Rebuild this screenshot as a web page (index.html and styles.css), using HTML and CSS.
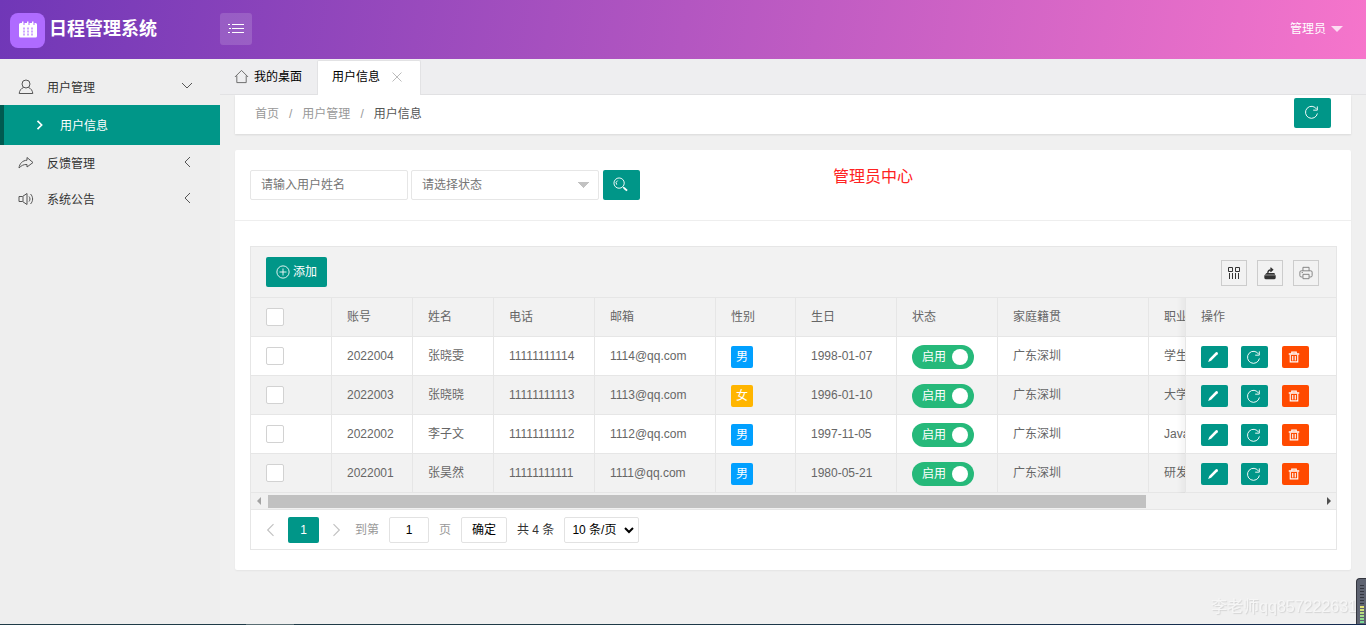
FILE: index.html
```html
<!DOCTYPE html>
<html lang="zh-CN">
<head>
<meta charset="utf-8">
<title>日程管理系统</title>
<link rel="stylesheet" href="styles.css">
</head>
<body>
<svg class="sprite" aria-hidden="true">
  <symbol id="i-chev" viewBox="0 0 12 12"><path d="M3 1l5 5-5 5"/></symbol>
  <symbol id="i-refresh" viewBox="0 0 16 16"><path d="M13.500 4.500A6.400 6.400 0 1 0 14.300 9M14.200 1.500V5.500H9.800"/></symbol>
  <symbol id="i-edit" viewBox="0 0 16 16"><path class="solid" d="M1.500 14.500l1.500-4L11.800 1.800a1.700 1.700 0 0 1 2.400 2.400L5.500 13z"/></symbol>
  <symbol id="i-trash" viewBox="0 0 16 16"><path class="thick" d="M1 4h14"/><path d="M5 3.500V1.500h6v2M3 5v9.500h10V5M6.300 6.500v6M9.700 6.500v6" stroke-width="1.500"/></symbol>
</svg>
<div class="app">
  <header class="header">
    <div class="brand">
      <span class="logo"><svg viewBox="0 0 20 20"><path class="solid" d="M1 4.500a1.500 1.500 0 0 1 1.500-1.500H4V1.500h1.500V5h1V3H9V1.500h1.500V5h1V3H14V1.500h1.500V5h1V3h1A1.500 1.500 0 0 1 19 4.500V16a1.500 1.500 0 0 1-1.500 1.500h-15A1.500 1.500 0 0 1 1 16z"/><path class="dots" d="M5 8.500h11M5 11.500h11M5 14.500h11"/></svg></span>
      <h1>日程管理系统</h1>
    </div>
    <button class="toggle" aria-label="折叠菜单"><svg viewBox="0 0 16 16"><path d="M4 3.500h12M4 7.500h12M4 11.500h12M0 3.500h2M1 7.500h2M0 11.500h2"/></svg></button>
    <a class="account" href="#">管理员<span class="caret"></span></a>
  </header>

  <nav class="side">
    <a class="item" href="#"><svg class="ico" viewBox="0 0 16 16"><circle cx="8" cy="5" r="4"/><path d="M5.500 8.500C3 9.500 1.500 11.500 1.200 14.500h13.600c-.3-3-1.800-5-4.300-6"/></svg><span>用户管理</span><svg class="arrow down"><use href="#i-chev"/></svg></a>
    <a class="sub" href="#"><svg class="arrow"><use href="#i-chev"/></svg><span>用户信息</span></a>
    <a class="item" href="#"><svg class="ico" viewBox="0 0 16 16"><path d="M9 2.500l6 5-6 4.500V9.500C5.500 9.300 3.500 10.500 1 13c.5-4.500 3.500-7.500 8-7.800z"/></svg><span>反馈管理</span><svg class="arrow left"><use href="#i-chev"/></svg></a>
    <a class="item" href="#"><svg class="ico" viewBox="0 0 16 16"><path d="M1 5.500h3.500L9 2.500v11l-4.500-3H1zM5 5.500v5M11 5.500c1.300 1.500 1.300 3.500 0 5M12.500 3c2.800 2.800 2.800 7.200 0 10"/></svg><span>系统公告</span><svg class="arrow left"><use href="#i-chev"/></svg></a>
  </nav>

  <main class="main">
    <div class="tabs">
      <a class="tab" href="#"><svg class="home" viewBox="0 0 16 16"><path d="M1 8.500l7-7 7 7M3 7v7.500h10V7"/></svg>我的桌面</a>
      <a class="tab on" href="#">用户信息<svg class="close" viewBox="0 0 12 12"><path d="M1.500 1.500l9 9M10.500 1.500l-9 9"/></svg></a>
    </div>
    <div class="crumbs">
      <a href="#">首页</a><i>/</i><a href="#">用户管理</a><i>/</i><b>用户信息</b>
      <button class="btn icon" aria-label="刷新"><svg><use href="#i-refresh"/></svg></button>
    </div>

    <section class="card">
      <form class="query">
        <input class="field name" type="text" placeholder="请输入用户姓名" aria-label="用户姓名">
        <select class="field state" aria-label="状态"><option>请选择状态</option></select>
        <button class="btn icon" type="button" aria-label="搜索"><svg viewBox="0 0 16 16"><circle cx="6.500" cy="6.500" r="5.500"/><path d="M5 3.800a3 3 0 0 0-1 4.400M10.500 10.500l2 2"/><path class="thick" d="M11.500 11.500l3.500 3"/></svg></button>
        <p class="note">管理员中心</p>
      </form>

      <div class="grid">
        <div class="tools">
          <button class="btn add"><svg viewBox="0 0 16 16"><circle cx="8" cy="8" r="7"/><path d="M8 4v8M4 8h8"/></svg>添加</button>
          <button class="tool" aria-label="筛选列"><svg viewBox="0 0 14 14"><path d="M1.500 1.500h4v4h-4zM8.500 1.500h4v4h-4zM2.500 7v6M5.500 7v6M8.500 7v6M11.500 7v6"/></svg></button>
          <button class="tool" aria-label="导出"><svg viewBox="0 0 16 16"><path class="solid" d="M1.500 10.500h13v3a1.500 1.500 0 0 1-1.500 1.500H3A1.500 1.500 0 0 1 1.500 13.500zM4 8h9l1 2H2z"/><path d="M5.500 8C5.500 5.500 7 4.300 10 4.300M8.500 2L11 4.300 8.500 6.500" stroke-width="1.500"/></svg></button>
          <button class="tool" aria-label="打印"><svg class="light" viewBox="0 0 16 16"><path d="M4.500 5.500v-4h7v4M4 12.500H2.500a1.500 1.500 0 0 1-1.500-1.500V7a1.500 1.500 0 0 1 1.500-1.500h11A1.500 1.500 0 0 1 15 7v4a1.500 1.500 0 0 1-1.500 1.500H12M4.500 9.500h7v5h-7zM3 7.500h1.500"/></svg></button>
        </div>
        <div class="scroll">
          <table>
            <colgroup><col class="c81"><col class="c81"><col class="c81"><col class="c101"><col class="c121"><col class="c80"><col class="c101"><col class="c101"><col class="c151"><col class="rest"><col class="ops"></colgroup>
            <thead>
              <tr><th><input type="checkbox" aria-label="全选"></th><th>账号</th><th>姓名</th><th>电话</th><th>邮箱</th><th>性别</th><th>生日</th><th>状态</th><th>家庭籍贯</th><th>职业</th><th class="fix">操作</th></tr>
            </thead>
            <tbody>
              <tr><td><input type="checkbox" aria-label="选择 2022004"></td><td>2022004</td><td>张晓雯</td><td>11111111114</td><td>1114@qq.com</td><td><span class="tag">男</span></td><td>1998-01-07</td><td><label class="switch"><input type="checkbox" checked>启用<span></span></label></td><td>广东深圳</td><td>学生</td><td class="fix"><div class="acts"><button class="btn" aria-label="编辑"><svg><use href="#i-edit"/></svg></button><button class="btn" aria-label="重置"><svg class="big"><use href="#i-refresh"/></svg></button><button class="btn red" aria-label="删除"><svg><use href="#i-trash"/></svg></button></div></td></tr>
              <tr><td><input type="checkbox" aria-label="选择 2022003"></td><td>2022003</td><td>张晓晓</td><td>11111111113</td><td>1113@qq.com</td><td><span class="tag f">女</span></td><td>1996-01-10</td><td><label class="switch"><input type="checkbox" checked>启用<span></span></label></td><td>广东深圳</td><td>大学</td><td class="fix"><div class="acts"><button class="btn" aria-label="编辑"><svg><use href="#i-edit"/></svg></button><button class="btn" aria-label="重置"><svg class="big"><use href="#i-refresh"/></svg></button><button class="btn red" aria-label="删除"><svg><use href="#i-trash"/></svg></button></div></td></tr>
              <tr><td><input type="checkbox" aria-label="选择 2022002"></td><td>2022002</td><td>李子文</td><td>11111111112</td><td>1112@qq.com</td><td><span class="tag">男</span></td><td>1997-11-05</td><td><label class="switch"><input type="checkbox" checked>启用<span></span></label></td><td>广东深圳</td><td>Java</td><td class="fix"><div class="acts"><button class="btn" aria-label="编辑"><svg><use href="#i-edit"/></svg></button><button class="btn" aria-label="重置"><svg class="big"><use href="#i-refresh"/></svg></button><button class="btn red" aria-label="删除"><svg><use href="#i-trash"/></svg></button></div></td></tr>
              <tr><td><input type="checkbox" aria-label="选择 2022001"></td><td>2022001</td><td>张昊然</td><td>11111111111</td><td>1111@qq.com</td><td><span class="tag">男</span></td><td>1980-05-21</td><td><label class="switch"><input type="checkbox" checked>启用<span></span></label></td><td>广东深圳</td><td>研发</td><td class="fix"><div class="acts"><button class="btn" aria-label="编辑"><svg><use href="#i-edit"/></svg></button><button class="btn" aria-label="重置"><svg class="big"><use href="#i-refresh"/></svg></button><button class="btn red" aria-label="删除"><svg><use href="#i-trash"/></svg></button></div></td></tr>
            </tbody>
          </table>
        </div>
        <div class="bar"><span class="tri l"></span><div class="track"><div class="thumb"></div></div><span class="tri r"></span></div>
        <div class="pager">
          <button class="nav" aria-label="上一页"><svg class="left"><use href="#i-chev"/></svg></button>
          <button class="page">1</button>
          <button class="nav" aria-label="下一页"><svg><use href="#i-chev"/></svg></button>
          <label class="jump">到第<input type="text" value="1">页</label>
          <button class="ok">确定</button>
          <span class="total">共 4 条</span>
          <span class="sizes"><select aria-label="每页条数"><option>10 条/页</option></select><svg viewBox="0 0 12 12"><path d="M2 4l4 4 4-4"/></svg></span>
        </div>
      </div>
    </section>
  </main>
</div>
<div class="mark">李老师qq857222631</div>
<div class="meter"><span class="dim"></span><span class="lit"></span></div>
<div class="edge"></div>
</body>
</html>
```
FILE: styles.css
```css
* { box-sizing: border-box; }
html, body { height: 100%; }
body {
  margin: 0;
  overflow: hidden;
  background: #f0f0f0;
  color: #666;
  font: 12px/20px "Liberation Sans", "Noto Sans CJK SC", sans-serif;
}
a { color: inherit; text-decoration: none; }
button, input, select { font: inherit; color: inherit; margin: 0; }
button { padding: 0; border: 0; background: none; }
svg { fill: none; stroke: currentColor; display: block; flex: none; }
.solid { fill: currentColor; stroke: none; }
.thick { stroke-width: 2; }
.sprite { display: none; }

.app {
  display: grid;
  grid-template: 59px 1fr / 220px minmax(0, 1fr);
  height: 100%;
}

.header {
  grid-column: 1 / 3;
  display: grid;
  grid-template-columns: 220px 1fr auto;
  align-items: center;
  padding-bottom: 1px;
  background: linear-gradient(100deg, #7037b7, #f675cb);
  color: #fff;
}
.brand { display: flex; align-items: center; gap: 4px; padding: 2px 0 0 10px; }
.logo {
  display: grid;
  place-items: center;
  width: 35px;
  height: 35px;
  border-radius: 8px;
  background: #af6bff;
}
.logo svg { width: 20px; height: 20px; }
.dots { stroke: #af6bff; stroke-width: 2; stroke-dasharray: 2 2; opacity: .6; }
.brand h1 { margin: 0; font-size: 18px; line-height: 26px; padding-bottom: 2px; }
.toggle {
  display: grid;
  place-items: center;
  width: 32px;
  height: 32px;
  border-radius: 3px;
  background: rgba(255, 255, 255, .15);
}
.toggle svg { width: 16px; height: 16px; }
.account { display: flex; align-items: center; gap: 5px; padding-right: 23px; }
.caret { border: 6px solid transparent; border-top-color: rgba(255, 255, 255, .75); border-bottom: 0; }

.side { padding-top: 10px; background: #eee; color: #333; }
.item { display: flex; align-items: center; height: 36px; padding: 0 27px 0 18px; }
.item span { margin-left: 13px; padding-top: 2px; flex: 1; }
.ico { width: 16px; height: 16px; color: #555; }
.arrow { width: 12px; height: 12px; color: #555; }
.item .arrow { margin-bottom: 2px; }
.down { transform: rotate(90deg); }
.left { transform: rotate(180deg); }
.sub {
  display: flex;
  align-items: center;
  gap: 14px;
  height: 40px;
  padding-left: 30px;
  border-left: 4px solid #005a50;
  background: #009688;
  color: #fff;
}
.sub span { padding-top: 2px; }
.sub .arrow { color: #fff; stroke-width: 2; height: 10px; }

.tabs {
  display: flex;
  height: 36px;
  padding-top: 1px;
  background: #eeeef0;
  border-bottom: 1px solid #e2e2e4;
  color: #000;
}
.tab { display: flex; align-items: center; gap: 5px; height: 33px; padding: 0 15px 0 14px; }
.tab.on {
  height: 35px;
  padding: 0 17px 3px 14px;
  gap: 11px;
  border: 1px solid #e2e2e4;
  border-bottom: 0;
  border-radius: 2px 2px 0 0;
  background: #fff;
  box-shadow: 0 1px #fff;
}
.home { width: 15px; height: 15px; color: #666; }
.close { width: 12px; height: 12px; color: #bbb; }

.crumbs {
  display: flex;
  align-items: center;
  height: 39px;
  margin: 0 15px;
  padding: 0 20px 3px;
  background: #fff;
  box-shadow: 0 1px 2px rgba(0, 0, 0, .1);
  color: #999;
}
.crumbs a, .crumbs i, .crumbs b { padding-top: 2px; }
.crumbs i { margin: 0 10px; font-style: normal; }
.crumbs b { flex: 1; font-weight: normal; color: #555; }

.btn {
  display: flex;
  align-items: center;
  justify-content: center;
  height: 30px;
  border-radius: 2px;
  background: #009688;
  color: #fff;
}
.icon { width: 37px; }
.icon svg { width: 15px; height: 15px; margin: 0 3px 1px 0; }

.card {
  margin: 16px 15px 0;
  padding-bottom: 20px;
  border-radius: 2px;
  background: #fff;
  box-shadow: 0 1px 2px rgba(0, 0, 0, .05);
}
.query {
  display: flex;
  align-items: center;
  padding: 20px 15px;
  border-bottom: 1px solid #eee;
}
.field { height: 30px; border: 1px solid #e6e6e6; border-radius: 2px; background: #fff; color: #757575; }
.name { width: 158px; margin-right: 3px; padding: 0 10px; }
.name::placeholder { color: #757575; }
.state {
  appearance: none;
  width: 188px;
  margin-right: 4px;
  padding: 0 10px;
  background-image: conic-gradient(from -45deg at 50% 100%, #c2c2c2 90deg, transparent 0);
  background-repeat: no-repeat;
  background-position: right 9px center;
  background-size: 12px 6px;
}
.note { align-self: flex-start; margin: 0 0 0 193px; font-size: 16px; line-height: 14px; color: #f22; }

.grid { margin: 25px 14px 0 15px; border: 1px solid #e6e6e6; }
.tools {
  display: flex;
  align-items: center;
  gap: 10px;
  height: 50px;
  padding: 0 17px 0 15px;
  background: #f2f2f2;
}
.add { width: 61px; gap: 3px; margin-right: auto; }
.add svg { width: 14px; height: 14px; }
.tool { display: grid; place-items: center; width: 26px; height: 26px; margin-top: 2px; border: 1px solid #ccc; color: #333; }
.tool svg { width: 14px; height: 14px; }
.tool .light { color: #777; }

.scroll { overflow: hidden; border-top: 1px solid #e6e6e6; }
table { width: 1299px; table-layout: fixed; border-collapse: separate; border-spacing: 0; }
.c80 { width: 80px; }
.c81 { width: 81px; }
.c101 { width: 101px; }
.c121 { width: 121px; }
.c151 { width: 151px; }
.ops { width: 151px; }
th, td {
  height: 39px;
  padding: 0 0 0 15px;
  border: solid #e6e6e6;
  border-width: 0 1px 1px 0;
  background: #fff;
  font-weight: normal;
  text-align: left;
  white-space: nowrap;
}
th, tr:nth-child(even) td { background: #f2f2f2; }
.fix { position: sticky; right: 0; border-left: 1px solid #e6e6e6; border-right: 0; padding-left: 15px; }
.fix::before {
  content: "";
  position: absolute;
  top: 0;
  bottom: -1px;
  left: -9px;
  width: 8px;
  background: linear-gradient(to left, rgba(0, 0, 0, .04), transparent);
}
td > input, th > input {
  appearance: none;
  display: block;
  width: 18px;
  height: 18px;
  border: 1px solid #d2d2d2;
  border-radius: 2px;
  background: #fff;
}
.tag {
  display: block;
  width: 22px;
  height: 22px;
  margin-top: 2px;
  border-radius: 2px;
  background: #01a0ff;
  color: #fff;
  line-height: 22px;
  text-align: center;
}
.tag.f { background: #ffb500; }
.switch {
  display: flex;
  align-items: center;
  gap: 6px;
  width: 62px;
  height: 24px;
  margin-top: 2px;
  padding-left: 10px;
  border-radius: 12px;
  background: #26b97a;
  color: #fff;
}
.switch input { position: absolute; appearance: none; width: 0; height: 0; }
.switch span { width: 16px; height: 16px; border-radius: 8px; background: #fff; }
.acts { display: flex; gap: 13px; padding-top: 2px; }
.acts .btn { width: 27px; height: 22px; }
.acts svg { width: 12px; height: 12px; margin-right: 3px; }
.acts .big { width: 15px; height: 15px; margin-right: 2px; }
.acts .red { margin-left: 1px; background: #ff4a00; }

.bar { display: flex; align-items: center; height: 17px; padding: 0 5px 0 6px; background: #f1f1f1; border-bottom: 1px solid #e6e6e6; }
.track { flex: 1; margin: 0 7px 0 7px; }
.thumb { width: 83.5%; height: 13px; background: #c1c1c1; }
.tri { border: 4px solid transparent; }
.tri.l { border-left: 0; border-right-color: #a3a3a3; }
.tri.r { border-right: 0; border-left-color: #505050; }

.pager { display: flex; align-items: center; height: 39px; padding-left: 12px; color: #333; }
.nav { width: 14px; color: #c2c2c2; }
.nav svg { width: 14px; height: 14px; }
.page { width: 31px; height: 26px; margin: 0 11px; border-radius: 2px; background: #009688; color: #fff; }
.jump { display: flex; align-items: center; gap: 10px; margin: 0 10px 0 11px; color: #999; }
.jump input { width: 40px; height: 26px; border: 1px solid #e2e2e2; border-radius: 2px; text-align: center; color: #000; }
.ok { width: 46px; height: 26px; padding-top: 1px; border: 1px solid #e2e2e2; border-radius: 2px; background: #fff; color: #000; }
.total { margin: 0 10px; }
.sizes { position: relative; color: #000; }
.sizes select { appearance: none; display: block; width: 75px; height: 26px; padding: 0 7px; border: 1px solid #e2e2e2; border-radius: 2px; background: #fff; }
.sizes svg { position: absolute; right: 4px; top: 7px; width: 12px; height: 12px; stroke-width: 2; pointer-events: none; }

.mark {
  position: fixed;
  right: 9px;
  bottom: 8px;
  color: #f6f6f6;
  font-size: 16px;
  text-shadow: 1px 1px 1px #d4d4d4;
}
.meter {
  position: fixed;
  right: 0;
  bottom: 0;
  width: 10px;
  height: 47px;
  padding: 6px 2px 0 3px;
  border: solid #33353d;
  border-width: 1px 0 0 1px;
  border-radius: 4px 0 0 0;
  background: #5e6371;
}
.meter span { display: block; height: 20px; }
.dim { background: repeating-linear-gradient(#33363f 0 1px, #5e6371 1px 3px); }
.meter .dim { height: 21px; }
.lit { background: repeating-linear-gradient(transparent 0 2px, #5e6371 2px 3px), linear-gradient(#e8e070, #60d8a0); }
.edge {
  position: fixed;
  inset: auto 0 0 0;
  height: 1px;
  background: linear-gradient(90deg, #1f3b47 0 246px, #596d73 246px 294px, #1f3b47 294px 600px, #142a50);
}
```
